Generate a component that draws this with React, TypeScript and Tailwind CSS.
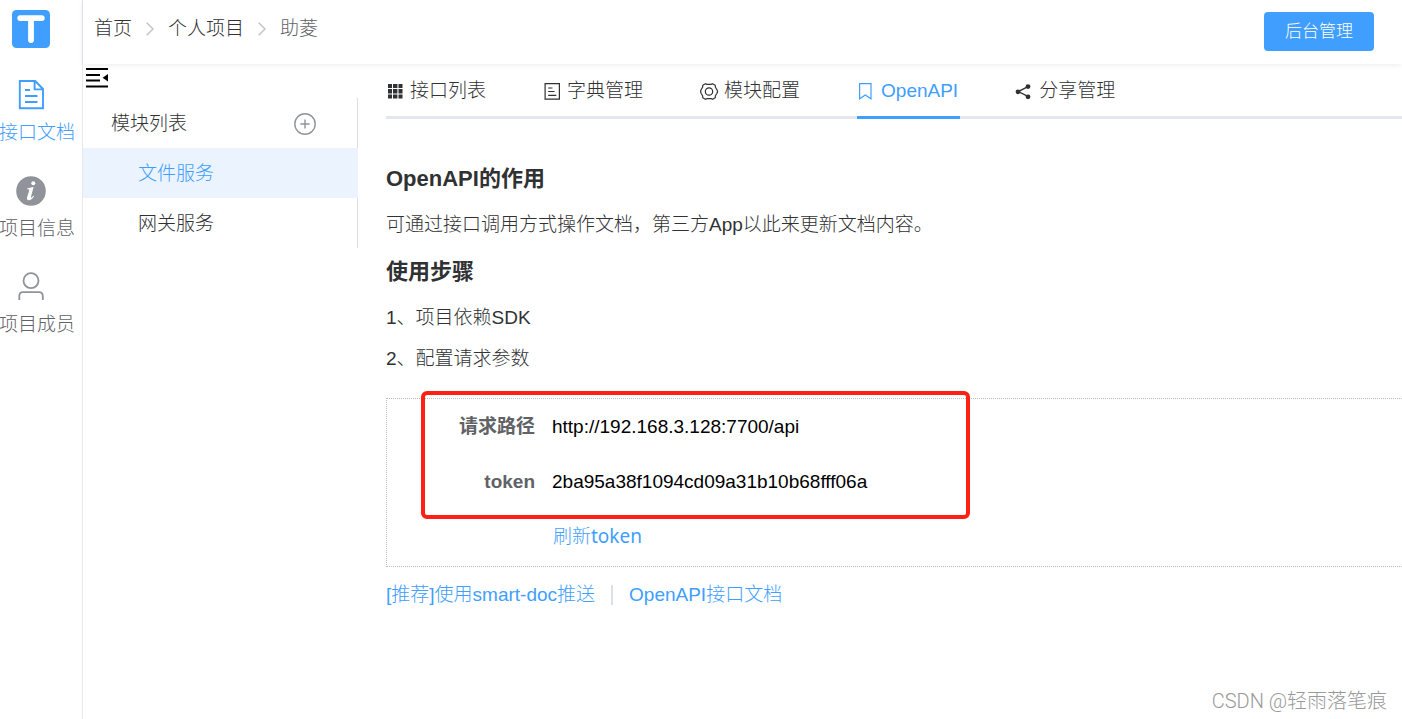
import React from 'react';

type IconProps = { className?: string };

const Logo = () => (
  <svg viewBox="0 0 38 38" className="size-[38px]" role="img" aria-label="T">
    <rect width="38" height="38" rx="4.5" fill="#409eff" />
    <path d="M8.2 8.1H29.8M19 8.5V30" fill="none" stroke="#fff" strokeWidth="5.8" strokeLinecap="round" />
  </svg>
);

const DocumentIcon = ({ className }: IconProps) => (
  <svg viewBox="0 0 30 30" className={className} fill="none" stroke="currentColor" strokeWidth="1.9" aria-hidden="true">
    <path d="M3.8 1H19.2L27 9V28.2H3.8ZM18.6 1.2V9.4H27M9 10H14M9 16H21.5M9 22H21.5" />
  </svg>
);

const InfoIcon = ({ className }: IconProps) => (
  <svg viewBox="0 0 30 30" className={className} aria-hidden="true">
    <circle cx="15" cy="15" r="14.8" fill="currentColor" />
    <circle cx="17.3" cy="7.2" r="2" fill="#fff" />
    <path d="M11.2 12.4C13.2 12.2 15.2 11.4 17.6 11.1L15 20.8C14.7 22.1 15.4 22 17.4 19.8L18.1 20.3C16.3 23 14.7 24.2 12.8 24.2C11.1 24.2 10.6 23 11.1 21.3L13.2 14.4C13.5 13.4 12.8 13.2 11.1 13.2Z" fill="#fff" />
  </svg>
);

const UserIcon = ({ className }: IconProps) => (
  <svg viewBox="0 0 30 30" className={className} fill="none" stroke="currentColor" strokeWidth="1.8" aria-hidden="true">
    <circle cx="15" cy="8.7" r="7.5" />
    <path d="M3.3 28V24C3.3 21.6 4.6 20.2 7 20.2H23C25.4 20.2 26.8 21.6 26.8 24V28" />
  </svg>
);

const CollapseIcon = () => (
  <svg viewBox="0 0 22 20" className="h-5 w-[22px]" aria-hidden="true">
    <path d="M0 1H22M0 7H14M0 12.5H14M0 18.5H22" stroke="#000" strokeWidth="2" />
    <path d="M22 6V13.6L16.6 9.8Z" fill="#000" />
  </svg>
);

const PlusCircleIcon = () => (
  <svg viewBox="0 0 22 22" className="size-[22px]" fill="none" stroke="#909399" strokeWidth="1.4" aria-hidden="true">
    <circle cx="11" cy="11" r="10.2" />
    <path d="M6.4 11H15.6M11 6.4V15.6" />
  </svg>
);

const Chevron = () => (
  <svg viewBox="0 0 8 14" className="h-3.5 w-2" fill="none" stroke="#c0c4cc" strokeWidth="1.5" aria-hidden="true">
    <path d="M0.7 0.7L7 7L0.7 13.3" />
  </svg>
);

const GridIcon = ({ className }: IconProps) => (
  <svg viewBox="0 0 19 19" className={className} fill="currentColor" aria-hidden="true">
    <path d="M2 2h4v4H2zM7 2h4.4v4H7zM12.5 2h4v4h-4zM2 7h4v4.4H2zM7 7h4.4v4.4H7zM12.5 7h4v4.4h-4zM2 12.5h4v4H2zM7 12.5h4.4v4H7zM12.5 12.5h4v4h-4z" />
  </svg>
);

const TicketIcon = ({ className }: IconProps) => (
  <svg viewBox="0 0 19 19" className={className} fill="none" stroke="currentColor" strokeWidth="1.2" aria-hidden="true">
    <path d="M2.1 1.6H16.4V17.1H2.1ZM5.2 6H9.5M5.2 9.5H11.5M5.2 13.3H13.3" />
  </svg>
);

const GearIcon = ({ className }: IconProps) => (
  <svg viewBox="0 0 19 19" className={className} fill="none" stroke="currentColor" strokeWidth="1.2" strokeLinejoin="round" aria-hidden="true">
    <path d="M5.4 1.7L7 2.4H11L12.6 1.7L15.2 3.2L15.4 5.2L17 7.8L17.6 9.5L17 11.2L15.4 13.8L15.2 15.8L12.6 17.3L11 16.6H7L5.4 17.3L2.8 15.8L2.6 13.8L1 11.2L0.6 9.5L1 7.8L2.6 5.2L2.8 3.2Z" />
    <circle cx="9" cy="9.5" r="3.7" />
  </svg>
);

const BookmarkIcon = ({ className }: IconProps) => (
  <svg viewBox="0 0 19 19" className={className} fill="none" stroke="currentColor" strokeWidth="1.2" aria-hidden="true">
    <path d="M2.6 1.6H14V16.8L8.3 13L2.6 16.8Z" />
  </svg>
);

const ShareIcon = ({ className }: IconProps) => (
  <svg viewBox="0 0 19 19" className={className} aria-hidden="true">
    <path d="M13 4.6L3.2 9.6L13 14.4" fill="none" stroke="currentColor" strokeWidth="1.3" />
    <circle cx="13" cy="4.6" r="2.4" fill="currentColor" />
    <circle cx="3" cy="9.8" r="2.4" fill="currentColor" />
    <circle cx="13" cy="14.8" r="2.4" fill="currentColor" />
  </svg>
);

const sections = [
  { label: '接口文档', Icon: DocumentIcon, active: true },
  { label: '项目信息', Icon: InfoIcon, active: false },
  { label: '项目成员', Icon: UserIcon, active: false },
];

const tabs = [
  { label: '接口列表', Icon: GridIcon },
  { label: '字典管理', Icon: TicketIcon },
  { label: '模块配置', Icon: GearIcon },
  { label: 'OpenAPI', Icon: BookmarkIcon, active: true },
  { label: '分享管理', Icon: ShareIcon },
];

function Sidebar() {
  return (
    <aside className="w-[83px] shrink-0 overflow-hidden border-r border-[#e6e8ef] pt-2.5">
      <a href="#" className="ml-3 block w-fit"><Logo /></a>
      <nav className="mt-8 flex w-[62px] flex-col gap-[29px]">
        {sections.map(({ label, Icon, active }) => (
          <a key={label} href="#" className="flex flex-col gap-[9px]">
            <Icon className={active ? 'size-[30px] self-center text-[#409eff]' : 'size-[30px] self-center text-[#909399]'} />
            <span className={active ? '-ml-px whitespace-nowrap leading-7 text-[#409eff]' : '-ml-px whitespace-nowrap leading-7 text-[#606266]'}>{label}</span>
          </a>
        ))}
      </nav>
    </aside>
  );
}

function Header() {
  return (
    <header className="flex h-16 items-start justify-between pl-[11px] pr-7 shadow-[0_1px_6px_rgba(0,0,0,0.08)]">
      <nav aria-label="breadcrumb" className="mt-[15px] flex items-center gap-3.5 leading-7">
        <a href="#">首页</a>
        <Chevron />
        <a href="#">个人项目</a>
        <Chevron />
        <span className="text-[#606266]">助菱</span>
      </nav>
      <button className="mt-3 h-[39px] w-[110px] rounded bg-[#409eff] text-[17px] text-white">后台管理</button>
    </header>
  );
}

function ModuleMenu() {
  return (
    <section className="w-[275px] shrink-0">
      <button aria-label="收起菜单" className="ml-[3px] mt-1 block h-[30px]"><span className="flex h-[30px] items-start"><CollapseIcon /></span></button>
      <div className="border-r border-[#dcdfe6]">
        <div className="flex h-[50px] items-center justify-between pl-7 pr-[41px] pt-0.5">
          <h2>模块列表</h2>
          <button aria-label="添加模块"><PlusCircleIcon /></button>
        </div>
        <ul>
          <li className="-mr-px bg-[#ebf3ff]"><a href="#" className="block pl-[55px] pt-0.5 leading-[48px] text-[#409eff]">文件服务</a></li>
          <li><a href="#" className="block pl-[55px] pt-0.5 leading-[48px]">网关服务</a></li>
        </ul>
      </div>
    </section>
  );
}

function Content() {
  return (
    <main className="min-w-0 flex-1 pl-7">
      <div role="tablist" className="flex h-[55px] gap-[55px] border-b-3 border-[#e4e7ed]">
        {tabs.map(({ label, Icon, active }) => (
          <button
            key={label}
            role="tab"
            aria-selected={!!active}
            className={active
              ? '-mb-[3px] flex items-center gap-[5px] whitespace-nowrap border-b-3 border-[#409eff] pr-0.5 pt-[3px] text-[#409eff]'
              : '-mb-[3px] flex items-center gap-[5px] whitespace-nowrap border-b-3 border-transparent pr-0.5 pt-[3px]'}
          >
            <Icon className="size-[19px]" />
            {label}
          </button>
        ))}
      </div>

      <h1 className="mt-[46px] text-[22px] font-bold leading-7">OpenAPI的作用</h1>
      <p className="mt-[18px] leading-7">可通过接口调用方式操作文档，第三方App以此来更新文档内容。</p>
      <h1 className="mt-[19px] text-[22px] font-bold leading-7">使用步骤</h1>
      <p className="mt-[18px] leading-7">1、项目依赖SDK</p>
      <p className="mt-[13px] leading-7">2、配置请求参数</p>

      <div className="relative mt-[25px] border border-r-0 border-dotted border-[#bbbbbb] pb-[2px]">
        <dl className="grid grid-cols-[148px_1fr] gap-x-[17px] leading-[55px]">
          <dt className="text-right font-bold text-[#606266]">请求路径</dt>
          <dd className="text-black">http://192.168.3.128:7700/api</dd>
          <dt className="text-right font-bold text-[#606266]">token</dt>
          <dd className="text-black">2ba95a38f1094cd09a31b10b68fff06a</dd>
        </dl>
        <button className="ml-[166px] block font-['Noto_Sans','Noto_Sans_CJK_SC',sans-serif] leading-[55px] text-[#409eff]"><span className="font-light">刷新</span><span className="font-normal">token</span></button>
        <div className="pointer-events-none absolute -top-2 left-[34px] h-32 w-[549px] rounded-md border-4 border-[#ff2014]" />
      </div>

      <div className="mt-3.5 flex items-center gap-4 leading-7 text-[#409eff]">
        <a href="#">[推荐]使用smart-doc推送</a>
        <span className="h-5 w-0.5 bg-[#dcdfe6]" />
        <a href="#">OpenAPI接口文档</a>
      </div>
    </main>
  );
}

export default function App() {
  return (
    <div className="relative flex min-h-screen overflow-hidden bg-white font-['Liberation_Sans','Noto_Sans_CJK_SC',sans-serif] text-[19px] font-light text-[#303133]">
      <Sidebar />
      <div className="min-w-0 flex-1">
        <Header />
        <div className="flex">
          <ModuleMenu />
          <Content />
        </div>
      </div>
      <div className="absolute bottom-1 right-[15px] font-['Roboto','Noto_Sans_CJK_SC',sans-serif] text-xl leading-7 text-[#999999]">CSDN @轻雨落笔痕</div>
    </div>
  );
}
